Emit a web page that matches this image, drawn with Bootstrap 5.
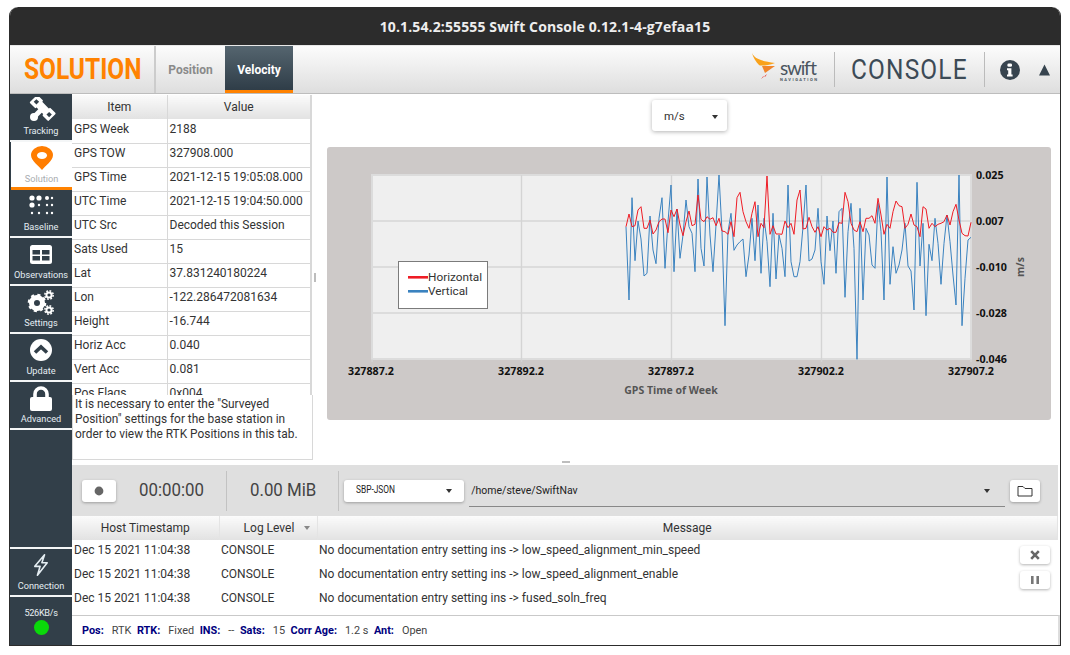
<!DOCTYPE html>
<html lang="en">
<head>
<meta charset="utf-8">
<title>Swift Console</title>
<link href="https://cdn.jsdelivr.net/npm/bootstrap@5.3.0/dist/css/bootstrap.min.css" rel="stylesheet">
<style>
html,body{height:100%;background:#fff;overflow:hidden}
body{font-family:Roboto,"Liberation Sans",sans-serif;font-size:12px;color:#333;padding:7px 9px 0 9px}
.sc-window{height:639px;border:solid #2c2c2c;border-width:0 1px 1px 1px;border-radius:9px 9px 0 0;overflow:hidden;background:#fff}
.sc-title{height:38px;margin:0 -1px;padding-left:20px;background:#2c2c2c;color:#eee;font-family:"Open Sans","Noto Sans",sans-serif;font-weight:700;font-size:14px;letter-spacing:.12px;border-radius:9px 9px 0 0;flex:none}
.sc-head{height:49px;flex:none;background:linear-gradient(#fcfcfc,#dedede);border-top:1px solid #e8e8e8;border-bottom:1px solid #bdbdbd}
.sc-brand{width:146px;border-right:2px solid #ccc;color:#ff8200;font-size:29px;font-weight:700;padding-left:14px;line-height:47px;overflow:hidden;white-space:nowrap}
.sc-brand span{display:inline-block;transform:scaleX(.845);transform-origin:0 50%}
.sc-tab{font-weight:700;font-size:12px;width:69px;color:#8a8a8a;line-height:48px;text-align:center}
.sc-tab.on{background:linear-gradient(#55656f,#2f3d48);color:#fff;height:47px;border-bottom:3px solid #ff8200;line-height:49px;width:68px}
.sc-vline{width:1px;height:35px;background:#bbb}
.sc-logo{margin-right:14px}
.sc-console{font-size:27px;font-weight:400;color:#3c4a56;letter-spacing:1.3px;padding:1px 16px 0;width:149px;white-space:nowrap;overflow:hidden}
.sc-console span{display:inline-block;transform:scaleX(.905);transform-origin:0 50%}
.sc-info-ic{margin:0 19px 0 15px}
.sc-tri{margin-right:10px}
.sc-side{width:62px;flex:none;background:#323f49}
.sc-nav{height:48px;flex:none;border-bottom:2px solid #f4f6f7;color:#e4edf2;font-size:9.2px;padding-top:3px;line-height:12px;white-space:nowrap}
.sc-nav svg{height:27px;width:30px;display:block;margin-bottom:1px}
.sc-nav.on{background:#fff;color:#a9adb1;border-bottom:3px solid #ff8200;margin-left:1px;width:61px}
.sc-nav.conn{padding-top:4px}
.sc-nav.conn svg{height:24px;margin-bottom:3px}
.sc-fill{border-bottom:2px solid #f4f6f7}
.sc-rate{height:48px;flex:none;color:#e8eef2;font-size:9.2px;line-height:12px;letter-spacing:-.35px;padding-top:10px}
.sc-led{width:15px;height:15px;border-radius:50%;background:#0ad90a;margin-top:1px}
.sc-left{width:240px;flex:none}
.sc-tablebox{height:300px;overflow:hidden;margin-top:1px;border-right:1px solid #d8d8d8}
.sc-tbl{border-collapse:collapse;width:100%;table-layout:fixed;font-size:12px;color:#333;white-space:nowrap}
.sc-tbl th{background:linear-gradient(#fbfbfb,#e2e2e2);font-weight:400;text-align:center;height:24px;padding:0;border-right:1px solid #d8d8d8;line-height:24px}
.sc-tbl td{height:24px;padding:1.5px 2px 2px 2px;vertical-align:top;line-height:17px;border-bottom:1px solid #d8d8d8;border-right:1px solid #d8d8d8}
.sc-info{height:65px;border:1px solid #d8d8d8;border-top:0;padding:2px;line-height:15px;font-size:11.9px;width:241px;background:#fff;position:relative;z-index:1}
.sc-split{width:15px;flex:none;padding-left:2px}
.sc-grip{width:2px;height:9px;background:#bdbdbd}
.sc-dropbox{background:#fff;width:75px;height:31px;border-radius:3px;box-shadow:0 1px 4px rgba(0,0,0,.3);font-size:11.5px;padding:2px 9px 0 12px;margin:6px 0 0 325px}
.sc-caret{width:0;height:0;border-left:3.5px solid transparent;border-right:3.5px solid transparent;border-top:4px solid #333;flex:none}
.sc-chart{display:block;width:724px;height:273px;margin:16px 0 0 0}
.sc-tick{font-family:"Open Sans","Noto Sans",sans-serif;font-weight:700;font-size:10.7px;fill:#111}
.sc-axis{font-family:"Open Sans","Noto Sans",sans-serif;font-weight:700;font-size:10.5px;fill:#555}
.sc-leg{font-family:Roboto,sans-serif;font-size:11.8px;fill:#333}
.sc-hgrip{width:8px;height:2px;background:#bdbdbd;margin:0 0 2px 490px;flex:none}
.sc-bar{height:51px;flex:none;background:#dfdfdf;padding:0 18px 0 10px;margin-right:2px}
.sc-whitebtn{background:#fff;border-radius:3px;box-shadow:0 1px 3px rgba(0,0,0,.3);height:22px;flex:none}
.sc-rec{width:34px}
.sc-big{font-size:18.5px;color:#444;line-height:1;white-space:nowrap;transform:scaleX(.91);transform-origin:0 50%;margin-right:-6.5px}
.sc-t1{margin-left:23px}
.sc-t2{margin-left:23px}
.sc-bv{width:1px;height:40px;background:#c2c2c2;margin-left:22px}
.sc-fmt{width:120px;margin-left:5px;padding:0 12px;font-size:11px;color:#222}
.sc-cond{display:inline-block;transform:scaleX(.76);transform-origin:0 50%}
.sc-path{height:32px;margin:1px 0 0 5px;border-bottom:1px solid #888;font-size:10.5px;padding:0 15px 0 2px;color:#222}
.sc-fold{width:30px;margin-left:5px}
.sc-log{height:99px;flex:none;position:relative;margin-right:2px}
.sc-log .sc-tbl th{border-right:1px solid #e4e4e4;color:#333}
.sc-log .sc-tbl td{border:0;padding:2px 2px 0 2px}
.sc-lvl{margin-left:18px;gap:10px}
.sc-lvl .sc-caret{border-top-color:#888}
.sc-mini{position:absolute;right:8px;width:30px;height:18px;background:#fff;border-radius:3px;box-shadow:0 1px 3px rgba(0,0,0,.3)}
.sc-m1{top:30px}
.sc-m2{top:55px}
.sc-status{height:30px;flex:none;border-top:1px solid #c9c9c9;border-right:2px solid #ddd;font-size:10.9px;padding:1px 0 0 10px;color:#444}
.sc-status b{color:#00007e;margin-left:5.5px;font-weight:700}
.sc-status b:first-child{margin-left:0}
.sc-status span{margin-left:8px}
</style>
</head>
<body>
<div class="sc-window d-flex flex-column">
  <div class="sc-title d-flex align-items-center justify-content-center">10.1.54.2:55555 Swift Console 0.12.1-4-g7efaa15</div>
  <div class="sc-head d-flex align-items-stretch">
    <div class="sc-brand"><span>SOLUTION</span></div>
    <div class="sc-tab">Position</div>
    <div class="sc-tab on">Velocity</div>
    <div class="ms-auto d-flex align-items-center">
      <svg class="sc-logo" width="68" height="36" viewBox="0 0 68 36" aria-label="Swift Navigation">
        <path d="M0 1C3 7 9 9 23 11C15 14 8 14 7 13C4 10 1 5 0 1Z" fill="#f9a21b"/>
        <path d="M10 14H23L13 21Z" fill="#f0852a"/>
        <path d="M9 27L15 22L13.5 24.5L11 24.5Z" fill="#e8352e"/>
        <text x="28" y="23" font-family="Lato,Roboto,sans-serif" font-size="19" fill="#4a5560" textLength="37">swift</text>
        <text x="28" y="29" font-family="Roboto,sans-serif" font-size="4" font-weight="700" fill="#4a5560" textLength="37">NAVIGATION</text>
      </svg>
      <div class="sc-vline"></div>
      <div class="sc-console"><span>CONSOLE</span></div>
      <div class="sc-vline"></div>
      <svg class="sc-info-ic" width="20" height="20" viewBox="0 0 20 20"><circle cx="10" cy="10" r="10" fill="#37444f"/><rect x="7.4" y="3.4" width="4.6" height="3.4" rx="1.4" fill="#fff"/><path d="M7 8.2h4.4v6.2h1.2v2H7v-2h1.2v-4.2H7z" fill="#fff"/></svg>
      <svg class="sc-tri" width="11" height="12" viewBox="0 0 11 12"><path d="M5.5 0.5L11 11.5H0Z" fill="#37444f"/></svg>
    </div>
  </div>
  <div class="d-flex flex-grow-1 overflow-hidden">
    <div class="sc-side d-flex flex-column">
      <div class="sc-nav d-flex flex-column align-items-center"><svg viewBox="0 0 30 27"><path d="M16 12L8.500 19.500" stroke="#fff" stroke-width="5"/><circle cx="8" cy="20" r="4" fill="#fff"/><g transform="rotate(45 16.700 11)" fill="#fff"><rect x="3.500" y="5.500" width="8.500" height="11" rx="1"/><rect x="21.500" y="5.500" width="8.500" height="11" rx="1"/><rect x="11" y="7" width="12" height="8" rx="1"/></g><g transform="rotate(45 16.700 11)" fill="#323f49"><rect x="6" y="9.200" width="3.800" height="3.800"/><rect x="24" y="9.200" width="3.800" height="3.800"/></g></svg>Tracking</div>
      <div class="sc-nav on d-flex flex-column align-items-center"><svg viewBox="0 0 30 27"><path d="M15 25C12 21 4 16 4 10A11 9 0 0 1 26 10C26 16 18 21 15 25Z" fill="#ff7d00"/><ellipse cx="15" cy="10.500" rx="5" ry="3.400" fill="#fff"/></svg>Solution</div>
      <div class="sc-nav d-flex flex-column align-items-center"><svg viewBox="0 0 30 27" fill="#fff"><circle cx="6" cy="5" r="2.600"/><circle cx="13" cy="5" r="2.600"/><circle cx="21" cy="5" r="2"/><circle cx="26" cy="5" r="1.200"/><circle cx="6" cy="12" r="2.600"/><circle cx="13" cy="12" r="1.200"/><circle cx="21" cy="12" r="1.200"/><circle cx="26" cy="12" r="1.200"/><circle cx="6" cy="20" r="1.200"/><circle cx="13" cy="20" r="1.200"/><circle cx="21" cy="20" r="1.200"/><circle cx="26" cy="20" r="1.200"/></svg>Baseline</div>
      <div class="sc-nav d-flex flex-column align-items-center"><svg viewBox="0 0 30 27"><rect x="4" y="4" width="22" height="19" rx="2.500" fill="#fff"/><rect x="6.500" y="9" width="7.500" height="4.500" fill="#323f49"/><rect x="16" y="9" width="7.500" height="4.500" fill="#323f49"/><rect x="6.500" y="15" width="7.500" height="4.500" fill="#323f49"/><rect x="16" y="15" width="7.500" height="4.500" fill="#323f49"/></svg>Observations</div>
      <div class="sc-nav d-flex flex-column align-items-center"><svg viewBox="0 0 30 27"><g fill="none" stroke="#fff"><circle cx="11" cy="14" r="5.500" stroke-width="5"/><circle cx="11" cy="14" r="8" stroke-width="2.600" stroke-dasharray="3 3.300"/><circle cx="23" cy="6" r="2.600" stroke-width="2"/><circle cx="23" cy="6" r="4.200" stroke-width="1.500" stroke-dasharray="1.800 1.500"/><circle cx="23" cy="21" r="2.600" stroke-width="2"/><circle cx="23" cy="21" r="4.200" stroke-width="1.500" stroke-dasharray="1.800 1.500"/></g></svg>Settings</div>
      <div class="sc-nav d-flex flex-column align-items-center"><svg viewBox="0 0 30 27"><circle cx="15" cy="13" r="11" fill="#fff"/><path d="M9 15.500L15 10L21 15.500" fill="none" stroke="#323f49" stroke-width="3.600"/></svg>Update</div>
      <div class="sc-nav d-flex flex-column align-items-center"><svg viewBox="0 0 30 27"><rect x="4" y="12" width="22" height="14" rx="2" fill="#fff"/><path d="M9 13V9A6 6 0 0 1 21 9V13" fill="none" stroke="#fff" stroke-width="3.600"/></svg>Advanced</div>
      <div class="sc-fill flex-grow-1"></div>
      <div class="sc-nav conn d-flex flex-column align-items-center"><svg viewBox="0 0 30 27"><path d="M19 2L8 15H14L11 25L22 11H16Z" fill="none" stroke="#e4edf2" stroke-width="1.800" stroke-linejoin="round"/></svg>Connection</div>
      <div class="sc-rate d-flex flex-column align-items-center">526KB/s<div class="sc-led"></div></div>
    </div>
    <div class="d-flex flex-column flex-grow-1 overflow-hidden">
      <div class="d-flex flex-grow-1 overflow-hidden">
        <div class="sc-left">
          <div class="sc-tablebox">
            <table class="sc-tbl">
              <colgroup><col style="width:95px"><col></colgroup>
              <thead><tr><th>Item</th><th>Value</th></tr></thead>
              <tbody>
                <tr><td>GPS Week</td><td>2188</td></tr>
                <tr><td>GPS TOW</td><td>327908.000</td></tr>
                <tr><td>GPS Time</td><td>2021-12-15 19:05:08.000</td></tr>
                <tr><td>UTC Time</td><td>2021-12-15 19:04:50.000</td></tr>
                <tr><td>UTC Src</td><td>Decoded this Session</td></tr>
                <tr><td>Sats Used</td><td>15</td></tr>
                <tr><td>Lat</td><td>37.831240180224</td></tr>
                <tr><td>Lon</td><td>-122.286472081634</td></tr>
                <tr><td>Height</td><td>-16.744</td></tr>
                <tr><td>Horiz Acc</td><td>0.040</td></tr>
                <tr><td>Vert Acc</td><td>0.081</td></tr>
                <tr><td>Pos Flags</td><td>0x004</td></tr>
              </tbody>
            </table>
          </div>
          <div class="sc-info">It is necessary to enter the "Surveyed Position" settings for the base station in order to view the RTK Positions in this tab.</div>
        </div>
        <div class="sc-split d-flex align-items-center"><div class="sc-grip"></div></div>
        <div class="flex-grow-1 d-flex flex-column overflow-hidden">
          <div class="sc-dropbox d-flex align-items-center justify-content-between"><span>m/s</span><span class="sc-caret"></span></div>
          <svg class="sc-chart" viewBox="327 147 724 273" role="img" aria-label="Velocity chart">
            <rect x="327" y="147" width="724" height="273" rx="3" fill="#cdc9c8"/>
            <rect x="372" y="175" width="599" height="184" fill="#efefef"/>
            <g stroke="#dcdcdc" stroke-width="2" fill="none">
              <path d="M372 221H971M372 267H971M372 313H971"/>
              <path d="M372 175H971V359H372Z"/>
              <path d="M521.5 175V362M671.5 175V362M821.5 175V362M372 359V362M971 359V362" stroke-width="1.4" stroke="#d4d4d4"/>
            </g>
            <polyline id="pv" fill="none" stroke="#3a82bf" stroke-width="1" stroke-linejoin="round"/>
            <polyline id="ph" fill="none" stroke="#ee1c25" stroke-width="1" stroke-linejoin="round"/>
            <rect x="398.5" y="261.5" width="89" height="47" fill="#fff" stroke="#7b7b7b" stroke-width="1"/>
            <path d="M408 277.3H428" stroke="#ee1c25" stroke-width="2.6"/>
            <path d="M408 291.3H428" stroke="#3a82bf" stroke-width="2.6"/>
            <text class="sc-leg" x="428" y="281">Horizontal</text>
            <text class="sc-leg" x="428" y="295">Vertical</text>
            <g class="sc-tick" text-anchor="middle">
              <text x="371" y="375">327887.2</text><text x="521" y="375">327892.2</text><text x="671" y="375">327897.2</text><text x="821" y="375">327902.2</text><text x="971" y="375">327907.2</text>
            </g>
            <g class="sc-tick">
              <text x="976" y="179">0.025</text><text x="976" y="225">0.007</text><text x="976" y="271">-0.010</text><text x="976" y="317">-0.028</text><text x="976" y="363">-0.046</text>
            </g>
            <text class="sc-axis" x="671" y="394" text-anchor="middle">GPS Time of Week</text>
            <text class="sc-axis" x="1024" y="267" text-anchor="middle" transform="rotate(-90 1024 267)">m/s</text>
          </svg>
        </div>
      </div>
      <div class="sc-hgrip"></div>
      <div class="sc-bar d-flex align-items-center">
        <div class="sc-whitebtn sc-rec d-flex align-items-center justify-content-center"><svg width="10" height="10" viewBox="0 0 10 10"><circle cx="5" cy="5" r="4.4" fill="#666"/></svg></div>
        <div class="sc-big sc-t1">00:00:00</div>
        <div class="sc-bv"></div>
        <div class="sc-big sc-t2">0.00 MiB</div>
        <div class="sc-bv"></div>
        <div class="sc-whitebtn sc-fmt d-flex align-items-center justify-content-between"><span class="sc-cond">SBP-JSON</span><span class="sc-caret"></span></div>
        <div class="sc-path d-flex align-items-center justify-content-between flex-grow-1"><span>/home/steve/SwiftNav</span><span class="sc-caret"></span></div>
        <div class="sc-whitebtn sc-fold d-flex align-items-center justify-content-center"><svg width="16" height="12" viewBox="0 0 16 12"><path d="M1 1.5H6L8 3.5H15V11H1Z" fill="none" stroke="#333" stroke-width="1"/></svg></div>
      </div>
      <div class="sc-log">
        <table class="sc-tbl">
          <colgroup><col style="width:147px"><col style="width:98px"><col></colgroup>
          <thead><tr><th>Host Timestamp</th><th><span class="sc-lvl d-inline-flex align-items-center">Log Level<span class="sc-caret"></span></span></th><th>Message</th></tr></thead>
          <tbody>
            <tr><td>Dec 15 2021 11:04:38</td><td>CONSOLE</td><td>No documentation entry setting ins -&gt; low_speed_alignment_min_speed</td></tr>
            <tr><td>Dec 15 2021 11:04:38</td><td>CONSOLE</td><td>No documentation entry setting ins -&gt; low_speed_alignment_enable</td></tr>
            <tr><td>Dec 15 2021 11:04:38</td><td>CONSOLE</td><td>No documentation entry setting ins -&gt; fused_soln_freq</td></tr>
          </tbody>
        </table>
        <div class="sc-mini sc-m1 d-flex align-items-center justify-content-center"><svg width="10" height="10" viewBox="0 0 10 10"><path d="M1.2 1.2L8.8 8.8M8.8 1.2L1.2 8.8" stroke="#666" stroke-width="2.6"/></svg></div>
        <div class="sc-mini sc-m2 d-flex align-items-center justify-content-center"><svg width="10" height="10" viewBox="0 0 10 10"><path d="M1 1h2.600v8H1zM6.400 1H9v8H6.400z" fill="#777"/></svg></div>
      </div>
      <div class="sc-status d-flex align-items-center">
        <b>Pos:</b><span>RTK</span><b>RTK:</b><span>Fixed</span><b>INS:</b><span>--</span><b>Sats:</b><span>15</span><b>Corr Age:</b><span>1.2 s</span><b>Ant:</b><span>Open</span>
      </div>
    </div>
  </div>
</div>
<script>
var blue=[185,405,98,287,168,222,333,325,153,255,296,160,98,310,170,60,320,132,280,210,105,185,205,320,42,250,303,36,210,320,180,30,200,482,200,145,256,240,230,222,335,270,160,287,120,325,160,230,365,145,342,210,250,335,60,290,335,335,290,185,60,288,282,255,130,290,358,153,257,168,325,140,130,397,200,115,250,583,130,405,190,210,300,310,115,200,405,36,358,245,325,300,255,175,303,318,435,52,303,175,452,238,287,160,235,358,235,150,230,330,420,30,482,340,225,217];
var red=[185,147,185,182,135,125,190,190,165,207,195,170,162,162,203,135,155,132,180,212,170,138,182,178,90,163,170,155,163,158,182,160,198,200,208,170,215,98,82,140,170,190,145,110,215,175,188,33,208,182,207,207,208,168,188,175,208,105,75,192,190,157,185,202,185,215,185,195,190,202,202,173,175,82,110,175,195,200,170,200,160,160,152,175,100,150,208,178,190,140,108,122,125,190,178,147,180,185,215,125,132,190,175,185,178,175,170,150,180,140,118,165,205,212,213,172];
function pts(a){return a.map(function(y,i){return (626+i*3).toFixed(1)+','+(165+y/3).toFixed(1)}).join(' ')}
document.getElementById('pv').setAttribute('points',pts(blue));
document.getElementById('ph').setAttribute('points',pts(red));
</script>
<script src="https://cdn.jsdelivr.net/npm/bootstrap@5.3.0/dist/js/bootstrap.bundle.min.js"></script>
</body>
</html>
